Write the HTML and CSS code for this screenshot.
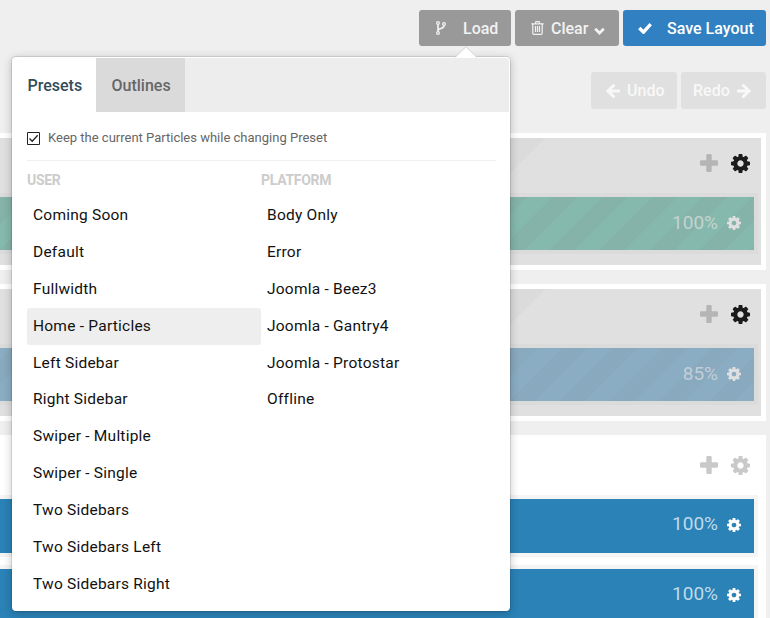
FILE: index.html
```html
<!DOCTYPE html>
<html lang="en">
<head>
<meta charset="utf-8">
<title>Layout Manager</title>
<link rel="stylesheet" href="styles.css">
</head>
<body>
<svg class="defs" aria-hidden="true">
  <symbol id="cog" viewBox="0 0 1536 1536"><path d="M1024 768q0-106-75-181t-181-75-181 75-75 181 75 181 181 75 181-75 75-181zm512-109v222q0 12-8 23t-20 13l-185 28q-19 54-39 91 35 50 107 138 10 12 10 25t-9 23q-27 37-99 108t-94 71q-12 0-26-9l-138-108q-44 23-91 38-16 136-29 186-7 28-36 28H657q-14 0-24.500-8.500T621 1506l-28-184q-49-16-90-37l-141 107q-10 9-25 9-14 0-25-11-126-114-165-168-7-10-7-23 0-12 8-23 15-21 51-66.500t54-70.500q-27-50-41-99L29 913q-13-2-21-12.500T0 877V655q0-12 8-23t19-13l186-28q14-46 39-92-40-57-107-138-10-12-10-24 0-10 9-23 26-36 98.500-107.500T337 135q13 0 26 10l138 107q44-23 91-38 16-136 29-186 7-28 36-28h222q14 0 24.500 8.500T915 30l28 184q49 16 90 37l142-107q9-9 24-9 13 0 25 10 129 119 165 170 7 8 7 22 0 12-8 23-15 21-51 66.500t-54 70.500q26 50 41 98l183 28q13 2 21 12.500t8 23.500z"/></symbol>
  <symbol id="plus" viewBox="0 0 18 18"><path d="M7.500 0h3q1.200 0 1.200 1.200v5.100h5.100q1.200 0 1.200 1.200v3q0 1.200-1.200 1.200h-5.100v5.100q0 1.200-1.200 1.200h-3q-1.200 0-1.200-1.200v-5.100H1.200Q0 11.700 0 10.500v-3q0-1.200 1.200-1.200h5.100V1.200Q6.300 0 7.500 0z"/></symbol>
  <symbol id="arrow" viewBox="0 0 14 14"><path d="M7.600 1.500 2 7l5.600 5.500M2.500 7h10.200" fill="none" stroke="currentColor" stroke-width="3" stroke-linecap="round"/></symbol>
</svg>

<main class="manager">
  <header class="toolbar">
    <button class="btn load"><svg viewBox="0 0 10 14"><g fill="none" stroke="currentColor" stroke-width="1.200"><circle cx="2" cy="2" r="1.400"/><circle cx="2" cy="12" r="1.400"/><circle cx="8" cy="3" r="1.400"/></g><path d="M2 3.500v7M8 4.500c0 3.500-5 2.500-6 5" fill="none" stroke="currentColor" stroke-width="1.700"/></svg><span>Load</span></button>
    <button class="btn clear"><svg class="trash" viewBox="0 0 13 14"><path d="M.3 2.900h12.400M4.300 2.900l.6-2.200h3.200l.6 2.200M1.800 3v9q0 1.300 1.200 1.300h7q1.200 0 1.200-1.300V3M4.500 5v6M6.500 5v6M8.500 5v6" fill="none" stroke="currentColor" stroke-width="1.200"/></svg><span>Clear</span><svg class="chevron" viewBox="0 0 11 8"><path d="m1.200 1.700 4.300 4.300 4.300-4.300" fill="none" stroke="currentColor" stroke-width="2.700"/></svg></button>
    <button class="btn save"><svg viewBox="0 0 14 12"><path d="m1.300 6 4.200 4.200 7.200-8" fill="none" stroke="currentColor" stroke-width="3.300"/></svg><span>Save Layout</span></button>
  </header>
  <div class="history">
    <button class="btn faded undo"><svg><use href="#arrow"/></svg><span>Undo</span></button>
    <button class="btn faded redo"><span>Redo</span><svg class="flip"><use href="#arrow"/></svg></button>
  </div>

  <section class="section inherited">
    <div class="tools"><svg class="add"><use href="#plus"/></svg><svg class="settings"><use href="#cog"/></svg></div>
    <div class="row"><div class="block green"><span>100%</span><svg><use href="#cog"/></svg></div></div>
  </section>
  <section class="section inherited">
    <div class="tools"><svg class="add"><use href="#plus"/></svg><svg class="settings"><use href="#cog"/></svg></div>
    <div class="row"><div class="block steel"><span>85%</span><svg><use href="#cog"/></svg></div></div>
  </section>
  <section class="section">
    <div class="tools"><svg class="add"><use href="#plus"/></svg><svg class="settings"><use href="#cog"/></svg></div>
    <div class="row"><div class="block"><span>100%</span><svg><use href="#cog"/></svg></div></div>
    <div class="row"><div class="block"><span>100%</span><svg><use href="#cog"/></svg></div></div>
  </section>
</main>

<div class="popover">
  <svg class="pointer" viewBox="0 0 22 12"><path d="M0 11.500 11 .7l11 10.800" fill="#fff" stroke="#d4d4d4"/></svg>
  <nav class="tabs"><a class="tab active">Presets</a><a class="tab">Outlines</a></nav>
  <div class="content">
    <label class="keep"><svg viewBox="0 0 13 13"><path d="M.5.5h12v12H.5z" fill="#fff" stroke="#222"/><path d="m2.500 6.500 2.700 2.800 5.500-6" fill="none" stroke="#222" stroke-width="1.300"/></svg><span>Keep the current Particles while changing Preset</span></label>
    <div class="columns">
      <div class="column">
        <h4>USER</h4>
        <ul><li>Coming Soon</li><li>Default</li><li>Fullwidth</li><li class="selected">Home - Particles</li><li>Left Sidebar</li><li>Right Sidebar</li><li>Swiper - Multiple</li><li>Swiper - Single</li><li>Two Sidebars</li><li>Two Sidebars Left</li><li>Two Sidebars Right</li></ul>
      </div>
      <div class="column">
        <h4>PLATFORM</h4>
        <ul><li>Body Only</li><li>Error</li><li>Joomla - Beez3</li><li>Joomla - Gantry4</li><li>Joomla - Protostar</li><li>Offline</li></ul>
      </div>
    </div>
  </div>
</div>
</body>
</html>
```
FILE: styles.css
```css
* { box-sizing: border-box; }
html, body { height: 100%; overflow: hidden; }
body { margin: 0; background: #efefef; font-family: Roboto, "Liberation Sans", sans-serif; font-size: 16px; color: #111; }
svg { flex: none; fill: currentColor; }
.defs { display: none; }
.manager { height: 100%; overflow: hidden; padding: 10px 4px 0 0; }

.toolbar, .history { display: flex; justify-content: flex-end; gap: 4px; }
.history { margin: 26px 0 24px; }
.btn { display: flex; align-items: center; height: 36px; padding: 0; border: 0; border-radius: 3px; background: #999; color: #f2f2f2; font: 500 16px Roboto, sans-serif; white-space: nowrap; }
.load { width: 92px; padding-left: 17px; gap: 17px; }
.load svg { width: 10px; height: 14px; }
.clear { width: 104px; padding-left: 16px; }
.trash { width: 13px; height: 14px; margin-right: 7px; }
.chevron { width: 11px; height: 8px; margin: 5px 0 0 6px; }
.save { width: 143px; padding-left: 15px; gap: 15px; background: #3180c2; color: #fff; }
.save svg { width: 14px; height: 12px; }
.faded { height: 37px; background: #e0e0e0; color: #f8f8f8; }
.faded svg { width: 14px; height: 14px; }
.undo { width: 86px; padding-left: 15px; gap: 7px; }
.redo { width: 85px; padding-left: 12px; gap: 7px; }
.flip { transform: scaleX(-1); }

.section { margin-bottom: 14px; padding: 5px 8px 16px 0; background: #fff; }
.inherited { height: 137px; padding: 0 3px 0 0; border: solid #fff; border-width: 5px 5px 5px 0; background: linear-gradient(-45deg, #e0e0e0 0 242px, #dbdbdb 242px 320px, #e0e0e0 320px); }
.tools { display: flex; justify-content: flex-end; align-items: center; gap: 13px; height: 55px; padding: 0 8px 5px 0; color: #c9c9c9; }
.tools .add { width: 18px; height: 18px; margin-top: -1px; }
.tools .settings { width: 19px; height: 19px; }
.inherited .add { color: #b5b5b5; }
.inherited .settings { color: #1b1b1b; }
.row { padding: 4px 4px 4px 0; background: #f5f5f5; }
.row + .row { margin-top: 8px; }
.inherited .row { background: #dbdbdb; }
.block { display: flex; justify-content: flex-end; align-items: center; height: 54px; padding: 0 13px 2px 0; gap: 9px; background: #2a82b7; color: #fff; font-size: 19px; }
.block span { color: #bfdaea; margin-top: -3px; }
.block svg { width: 14px; height: 14px; }
.inherited .block { height: 53px; color: #e0e0e0; }
.inherited .block span { margin-top: -1px; color: #c2d4d0; }
.green { background: repeating-linear-gradient(-45deg, #85b3a9 0 3px, #86b9ad 3px 20.700px, #85b3a9 20.700px 35.360px); }
.steel { background: repeating-linear-gradient(-45deg, #8aadc3 0 14.100px, #89a9be 14.100px 31.800px, #8aadc3 31.800px 35.360px); }
.inherited .steel span { color: #c2ced8; }

.popover { position: absolute; left: 11px; top: 56px; width: 500px; height: 556px; border: 1px solid rgba(0, 0, 0, .1); border-radius: 5px; background: #fff; box-shadow: 0 2px 8px rgba(0, 0, 0, .2); background-clip: padding-box; }
.pointer { position: absolute; left: 443px; top: -11px; width: 22px; height: 12px; }
.tabs { display: flex; height: 54px; margin: 1px 1px 0 0; background: #ededed; border-radius: 4px 4px 0 0; }
.tab { display: flex; align-items: center; width: 89px; padding: 0 0 0 15.500px; background: #dadada; color: #666; font-weight: 500; }
.tab.active { width: 84px; background: #fff; color: #314d59; border-radius: 4px 0 0 0; }
.content { padding: 0 14px 0 15px; }
.keep { display: flex; align-items: center; gap: 8px; height: 49px; padding-top: 4px; border-bottom: 1px solid #f0f0f0; color: #666; font-size: 13px; }
.keep svg { width: 13px; height: 13px; }
.keep span { margin-top: -2px; }
.columns { display: flex; }
.column { width: 234px; }
h4 { margin: 0; height: 36.300px; padding-top: 10px; font-size: 14px; line-height: 18px; font-weight: 700; letter-spacing: -.3px; color: #ccc; }
ul { margin: 0; padding: 0; list-style: none; }
li { height: 36.840px; padding-left: 6px; line-height: 37px; font-size: 15.500px; letter-spacing: .23px; border-radius: 3px; white-space: nowrap; }
.selected { background: #eee; }
```
